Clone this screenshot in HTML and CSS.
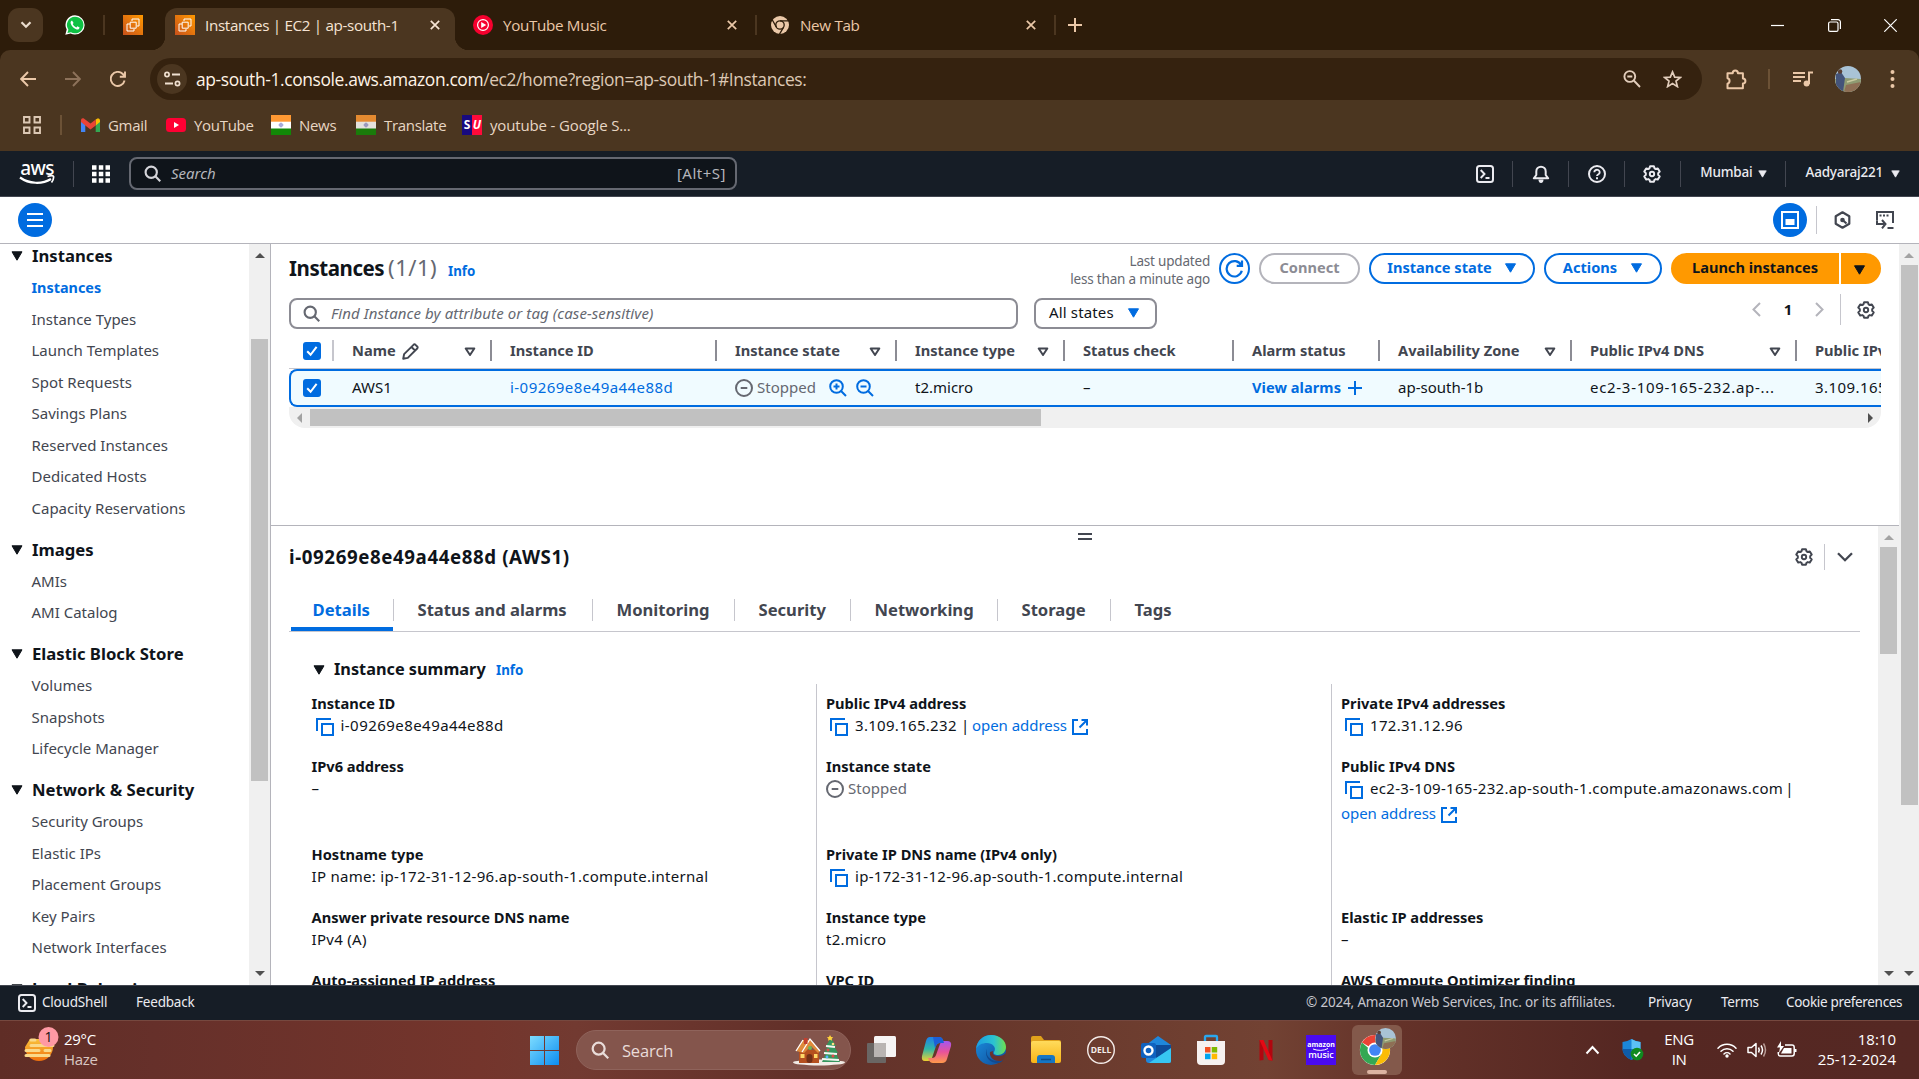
FILE: index.html
```html
<!DOCTYPE html>
<html lang="en">
<head>
<meta charset="utf-8">
<title>Instances | EC2 | ap-south-1</title>
<link rel="stylesheet" href="styles.css">
</head>
<body>
<svg class="defs" width="0" height="0" aria-hidden="true">
  <defs>
    <linearGradient id="g-ec2" x1="0" y1="1" x2="1" y2="0"><stop offset="0" stop-color="#c8511b"/><stop offset="1" stop-color="#ff9900"/></linearGradient>
    <linearGradient id="g-win" x1="0" y1="0" x2="1" y2="1"><stop offset="0" stop-color="#7ddcff"/><stop offset="1" stop-color="#0c8df0"/></linearGradient>
    <linearGradient id="g-edge" x1="0" y1="0" x2="1" y2="0"><stop offset="0" stop-color="#1b9de2"/><stop offset=".6" stop-color="#2cc3d0"/><stop offset="1" stop-color="#6ee04f"/></linearGradient>
    <linearGradient id="g-edge2" x1="0" y1="0" x2="1" y2="1"><stop offset="0" stop-color="#1b8fe0"/><stop offset="1" stop-color="#0f4a96"/></linearGradient>
    <linearGradient id="g-folder" x1="0" y1="0" x2="0" y2="1"><stop offset="0" stop-color="#ffdb5c"/><stop offset="1" stop-color="#f8b416"/></linearGradient>
    <linearGradient id="g-cop1" x1="0" y1="0" x2="0" y2="1"><stop offset="0" stop-color="#1f7fe8"/><stop offset=".5" stop-color="#2fb6a8"/><stop offset="1" stop-color="#f0d030"/></linearGradient>
    <linearGradient id="g-cop2" x1="0" y1="0" x2="0" y2="1"><stop offset="0" stop-color="#a456f0"/><stop offset=".5" stop-color="#e8529a"/><stop offset="1" stop-color="#ff9a4a"/></linearGradient>
    <linearGradient id="g-sun" x1="0" y1="0" x2="0" y2="1"><stop offset="0" stop-color="#f9c23c"/><stop offset="1" stop-color="#f0700c"/></linearGradient>
    <symbol id="i-ec2" viewBox="0 0 20 20"><rect width="20" height="20" fill="url(#g-ec2)"/><path d="M7.200 7.200h6v6h-6zM9 6V4h7v7h-2M7 9H4v7h7v-2" fill="none" stroke="#fff" stroke-width="1"/></symbol>
    <symbol id="i-x" viewBox="0 0 10 10"><path d="M.8.8l8.400 8.400M9.200.8L.8 9.200" fill="none" stroke="currentColor" stroke-width="1.700"/></symbol>
    <symbol id="i-search" viewBox="0 0 16 16"><circle cx="6.800" cy="6.800" r="5.300" fill="none" stroke="currentColor" stroke-width="2"/><path d="M10.700 10.700l4.600 4.600" stroke="currentColor" stroke-width="2"/></symbol>
    <symbol id="i-gear" viewBox="0 0 18 18"><path d="M7.100 1.300h3.800l.6 2 1.300.7 2-.6 1.900 3.200-1.500 1.500v1.800l1.500 1.500-1.900 3.200-2-.5-1.300.7-.6 2H7.100l-.6-2-1.300-.7-2 .5-1.900-3.200 1.500-1.500V8.100L1.300 6.600l1.900-3.200 2 .6 1.300-.7z" fill="none" stroke="currentColor" stroke-width="2" stroke-linejoin="round"/><circle cx="9" cy="9" r="2.200" fill="none" stroke="currentColor" stroke-width="1.900"/></symbol>
    <symbol id="i-shell" viewBox="0 0 18 18"><rect x="1" y="1" width="16" height="16" rx="2.500" fill="none" stroke="currentColor" stroke-width="2"/><path d="M4.700 5l3.800 4-3.800 4M9.500 13h4" fill="none" stroke="currentColor" stroke-width="1.900"/></symbol>
    <symbol id="i-tri" viewBox="0 0 12 10"><path d="M1 .8h10L6 9.200z" fill="currentColor" stroke="currentColor" stroke-width="1" stroke-linejoin="round"/></symbol>
    <symbol id="i-trio" viewBox="0 0 12 10"><path d="M1.700 1.500h8.600L6 8z" fill="none" stroke="currentColor" stroke-width="2" stroke-linejoin="round"/></symbol>
    <symbol id="i-check" viewBox="0 0 18 18"><rect width="18" height="18" rx="3" fill="#006ce0"/><path d="M4.200 9.200l3.400 3.600 6-8" fill="none" stroke="#fff" stroke-width="2"/></symbol>
    <symbol id="i-copy" viewBox="0 0 18 18"><path d="M1 13V1h14" fill="none" stroke="#006ce0" stroke-width="2"/><rect x="6" y="6" width="11" height="11" fill="#fff" stroke="#006ce0" stroke-width="2"/></symbol>
    <symbol id="i-ext" viewBox="0 0 16 16"><path d="M6 1H1v14h14V10M9.500 1H15v5.500M15 1L7.500 8.500" fill="none" stroke="#006ce0" stroke-width="2"/></symbol>
    <symbol id="i-stop" viewBox="0 0 18 18"><circle cx="9" cy="9" r="8" fill="none" stroke="#656871" stroke-width="2"/><path d="M5.700 9h6.600" stroke="#656871" stroke-width="2"/></symbol>
    <symbol id="i-flag" viewBox="0 0 20 20"><rect width="20" height="20" fill="#fff"/><rect width="20" height="6.700" fill="#ff9933"/><rect y="13.500" width="20" height="6.500" fill="#128807"/><circle cx="10" cy="10" r="2" fill="#8f93cc"/><path d="M10 7v6M7 10h6" stroke="#b9bbe2" stroke-width=".7"/></symbol>
    <symbol id="i-chrome" viewBox="0 0 36 36"><circle cx="18" cy="18" r="17" fill="#fff"/><path d="M18 18L3.300 9.500A17 17 0 0 1 32.700 9.500z" fill="#ea4335"/><path d="M3.300 9.500A17 17 0 0 0 18 35l7.400-12.700H18z" fill="#34a853"/><path d="M32.700 9.500A17 17 0 0 1 18 35l7.400-12.800L18 9.500z" fill="#fbbc05"/><circle cx="18" cy="18" r="8.500" fill="#fff"/><circle cx="18" cy="18" r="6.600" fill="#4285f4"/></symbol>
    <symbol id="i-photo" viewBox="0 0 26 26"><clipPath id="c-photo"><circle cx="13" cy="13" r="13"/></clipPath><g clip-path="url(#c-photo)"><rect width="26" height="26" fill="#a9c3d6"/><path d="M0 13l10-1 16 1v13H0z" fill="#8f9b72"/><path d="M11 19l15-3v10H9z" fill="#8e6f55"/><path d="M1 8l5-2 4 6-2 14H1z" fill="#44547a"/><circle cx="5" cy="5.500" r="2.300" fill="#5a4035"/><path d="M12 16l10-3" stroke="#c9cba0" stroke-width="1.500"/></g></symbol>
  </defs>
</svg>

<header class="browser">
  <div class="tabstrip">
    <div class="tabmenu"><svg width="12" height="8" viewBox="0 0 12 8"><path d="M1.500 1.200L6 5.800l4.500-4.600" fill="none" stroke="#eadccd" stroke-width="2.200"/></svg></div>
    <svg class="fav" viewBox="0 0 20 20"><path d="M10 .3A9.600 9.600 0 0 1 10 19.600a9.800 9.800 0 0 1-4.400-1L.3 19.800 1.700 14.600A9.600 9.600 0 0 1 10 .3z" fill="#fff"/><path d="M10 1.700a8.300 8.300 0 1 1-4 15.500l-3.600.9 1-3.400A8.300 8.300 0 0 1 10 1.700z" fill="#0fc144"/><path d="M7 5.500c-.9.300-1.800 1.500-1.300 3 .9 2.900 3.200 5 6 5.900 1.500.4 2.700-.6 2.900-2l-2.200-1.100-1 1.200C9.600 11.700 8.400 10.600 7.700 9l.9-1.100z" fill="#fff"/></svg>
    <i class="tdiv"></i>
    <svg class="fav"><use href="#i-ec2"/></svg>
    <div class="tab active"><svg class="fav"><use href="#i-ec2"/></svg><span class="tt">Instances | EC2 | ap-south-1</span><svg class="cl"><use href="#i-x"/></svg></div>
    <div class="tab"><svg class="fav" viewBox="0 0 20 20"><circle cx="10" cy="10" r="10" fill="#f5002e"/><circle cx="10" cy="10" r="5.400" fill="none" stroke="#fff" stroke-width="1.200"/><path d="M8.200 7l5 3-5 3z" fill="#fff"/></svg><span class="tt">YouTube Music</span><svg class="cl"><use href="#i-x"/></svg></div>
    <i class="tdiv"></i>
    <div class="tab third"><svg class="fav" viewBox="0 0 20 20"><circle cx="10" cy="10" r="9" fill="#ebc8a8"/><circle cx="10" cy="10" r="4.200" fill="#ebc8a8" stroke="#2d1c0a" stroke-width="1.300"/><path d="M10 5.800h8.500M6.400 12.100L2.200 4.800M13.600 12.100L9.400 19.400" stroke="#2d1c0a" stroke-width="1.300"/></svg><span class="tt">New Tab</span><svg class="cl"><use href="#i-x"/></svg></div>
    <i class="tdiv"></i>
    <svg class="plus" width="14" height="14" viewBox="0 0 14 14"><path d="M7 0v14M0 7h14" stroke="#ebc8a8" stroke-width="2"/></svg>
    <div class="winctl">
      <svg width="13" height="13" viewBox="0 0 13 13"><path d="M0 6.500h13" stroke="#fff" stroke-width="1.200"/></svg>
      <svg width="13" height="13" viewBox="0 0 13 13"><rect x=".6" y="3" width="9.400" height="9.400" rx="1.500" fill="none" stroke="#fff" stroke-width="1.200"/><path d="M3 .7h7a2.400 2.400 0 0 1 2.400 2.400V10" fill="none" stroke="#fff" stroke-width="1.200"/></svg>
      <svg width="13" height="13" viewBox="0 0 13 13"><path d="M.3.300l12.400 12.400M12.700.300L.3 12.700" stroke="#fff" stroke-width="1.200"/></svg>
    </div>
  </div>
  <div class="toolbar">
    <div class="urlrow">
      <svg width="16" height="16" viewBox="0 0 16 16"><path d="M16 8H1.500M8 1L1.200 8 8 15" fill="none" stroke="#ebc8a8" stroke-width="1.900"/></svg>
      <svg width="16" height="16" viewBox="0 0 16 16"><path d="M0 8h14.500M8 1l6.800 7L8 15" fill="none" stroke="#8d725a" stroke-width="1.900"/></svg>
      <svg width="16" height="16" viewBox="0 0 16 16"><path d="M14.600 9.500A7 7 0 1 1 12.800 3L15 5.500M15 .5v5.200H9.800" fill="none" stroke="#ebc8a8" stroke-width="1.900"/></svg>
      <div class="omni">
        <span class="site"><svg width="17" height="16" viewBox="0 0 17 16"><circle cx="3" cy="3.500" r="2.100" fill="none" stroke="#f0e0d0" stroke-width="1.700"/><path d="M8 3.500h8M1 12.500h8" stroke="#f0e0d0" stroke-width="1.800"/><circle cx="13.500" cy="12.500" r="2.100" fill="none" stroke="#f0e0d0" stroke-width="1.700"/></svg></span>
        <span class="url"><b>ap-south-1.console.aws.amazon.com</b>/ec2/home?region=ap-south-1#Instances:</span>
        <svg class="oz" width="18" height="18" viewBox="0 0 18 18"><circle cx="6.800" cy="6.500" r="5.400" fill="none" stroke="#e2cdbb" stroke-width="1.900"/><path d="M10.800 10.500l6.200 6.500M4.300 6.500h5" stroke="#e2cdbb" stroke-width="1.900"/></svg>
        <svg width="19" height="18" viewBox="0 0 19 18"><path d="M9.500 1.900l2.200 5.200 5.600.4-4.300 3.600 1.400 5.500-4.900-3-4.900 3L6 11.100 1.700 7.500l5.600-.4z" fill="none" stroke="#e2cdbb" stroke-width="1.700"/></svg>
      </div>
      <svg class="puz" width="21" height="21" viewBox="0 0 21 21"><path d="M1.500 4.200h5.200a2.600 2.600 0 0 1 5.200 0h5v5.200a2.500 2.500 0 0 1 0 5v4.900H1.500v-4.600a2.800 2.800 0 0 0 0-5.400z" fill="none" stroke="#ebc8a8" stroke-width="2" stroke-linejoin="round"/></svg>
      <i class="bdiv"></i>
      <svg width="20" height="16" viewBox="0 0 20 16"><path d="M0 2h12M0 6h12M0 10h8M16 13V1.500h4" fill="none" stroke="#ebc8a8" stroke-width="2"/><circle cx="13.600" cy="12.600" r="3" fill="#ebc8a8"/></svg>
      <svg class="ava" width="26" height="26"><use href="#i-photo"/></svg>
      <svg class="dots" width="5" height="20" viewBox="0 0 5 20"><g fill="#ebc8a8"><circle cx="2.500" cy="3" r="2"/><circle cx="2.500" cy="10" r="2"/><circle cx="2.500" cy="17" r="2"/></g></svg>
    </div>
    <div class="bookmarks">
      <svg width="18" height="18" viewBox="0 0 18 18"><path d="M1 1h5.500v5.500H1zM11.500 1H17v5.500h-5.500zM1 11.500h5.500V17H1zM11.500 11.500H17V17h-5.500z" fill="none" stroke="#dcc8b4" stroke-width="1.900"/></svg>
      <i class="bdiv"></i>
      <svg width="19" height="14" viewBox="0 0 19 14"><path d="M0 1.500V14h4.300V6z" fill="#4285f4"/><path d="M19 1.500V14h-4.300V6z" fill="#34a853"/><path d="M14.700 1.500L17 .2q2 .3 2 2V4l-4.300 3.500z" fill="#fbbc04"/><path d="M0 4V2Q.3-.3 2.500.3L9.500 5.500 14.700 1.500V7.500L9.500 11.500 4.300 7.500 0 4z" fill="#ea4335"/></svg><span>Gmail</span>
      <svg width="20" height="14" viewBox="0 0 20 14"><rect width="20" height="14" rx="3.500" fill="#ff0033"/><path d="M8 4l5 3-5 3z" fill="#fff"/></svg><span>YouTube</span>
      <svg width="20" height="20"><use href="#i-flag"/></svg><span>News</span>
      <svg class="dim" width="20" height="20"><use href="#i-flag"/></svg><span>Translate</span>
      <b class="su"><em>S</em><em>U</em></b><span>youtube - Google S...</span>
    </div>
  </div>
</header>

<header class="awsnav">
  <span class="awslogo"><span>aws</span><svg width="36" height="11" viewBox="0 0 36 11"><path d="M1 2.500c9 6.500 22 7 31 1.500" fill="none" stroke="#fff" stroke-width="2.200"/><path d="M28.500 1.500c4-1.200 6-.8 6 0 .3 1.600-.5 4-2 6" fill="none" stroke="#fff" stroke-width="1.700"/></svg></span>
  <i class="vd"></i>
  <svg width="18" height="18" viewBox="0 0 18 18"><path d="M0 2.500h4.500M6.800 2.500h4.500M13.500 2.500H18M0 9h4.500M6.800 9h4.500M13.500 9H18M0 15.500h4.500M6.800 15.500h4.500M13.500 15.500H18" stroke="#fff" stroke-width="4.300"/></svg>
  <div class="nsearch"><svg width="17" height="17"><use href="#i-search"/></svg><em>Search</em><span>[Alt+S]</span></div>
  <div class="navr">
    <svg width="18" height="18"><use href="#i-shell"/></svg><i class="vd"></i>
    <svg width="18" height="18" viewBox="0 0 18 18"><path d="M1.800 13.300h14.400L13.700 10V6.400a4.700 4.700 0 0 0-9.400 0V10z" fill="none" stroke="currentColor" stroke-width="2" stroke-linejoin="round"/><path d="M6.500 14.500a2.500 3.400 0 0 0 5 0z" fill="currentColor"/></svg><i class="vd"></i>
    <svg width="18" height="18" viewBox="0 0 18 18"><circle cx="9" cy="9" r="8" fill="none" stroke="currentColor" stroke-width="2"/><path d="M6.300 7.300a2.700 2.500 0 1 1 4.200 2Q9 10.200 9 11" fill="none" stroke="currentColor" stroke-width="1.900"/><path d="M8 12.300h2v2H8z" fill="currentColor"/></svg><i class="vd"></i>
    <svg width="18" height="18"><use href="#i-gear"/></svg><i class="vd"></i>
    <span class="nt n1">Mumbai</span><svg width="9" height="8"><use href="#i-tri"/></svg><i class="vd"></i>
    <span class="nt n2">Aadyaraj221</span><svg width="9" height="8"><use href="#i-tri"/></svg>
  </div>
</header>

<div class="subbar">
  <span class="round"><svg width="16" height="14" viewBox="0 0 16 14"><path d="M0 1h16M0 7h16M0 13h16" stroke="#fff" stroke-width="2"/></svg></span>
  <span class="round r2"><svg width="18" height="18" viewBox="0 0 18 18"><rect x="1" y="1" width="16" height="16" fill="none" stroke="#fff" stroke-width="2"/><rect x="4.500" y="8" width="9" height="6" fill="#fff"/></svg></span>
  <i></i>
  <svg width="17" height="18" viewBox="0 0 17 18"><path d="M8.500 1.300l6.800 3.900v7.600l-6.800 3.900-6.800-3.900V5.200z" fill="none" stroke="#424650" stroke-width="2.200" stroke-linejoin="round"/><path d="M8.500 9l4 3.500" stroke="#424650" stroke-width="2.200"/><circle cx="8.500" cy="9" r="2.300" fill="#424650"/></svg>
  <svg class="sb2" width="18" height="18" viewBox="0 0 18 18"><path d="M1 9.500V1h16v11" fill="none" stroke="#424650" stroke-width="2"/><path d="M3.500 4.500h2M7 4.500h2M10.500 4.500h2" stroke="#424650" stroke-width="1.800"/><path d="M1 9.500V13h7M6 9l3.500 4L6 17.300M11.500 17h6" fill="none" stroke="#424650" stroke-width="2"/></svg>
</div>

<div class="app">
  <nav class="side">
    <div class="menu">
      <h3><svg><use href="#i-tri"/></svg>Instances</h3>
      <a class="on">Instances</a><a>Instance Types</a><a>Launch Templates</a><a>Spot Requests</a><a>Savings Plans</a><a>Reserved Instances</a><a>Dedicated Hosts</a><a>Capacity Reservations</a>
      <h3><svg><use href="#i-tri"/></svg>Images</h3>
      <a>AMIs</a><a>AMI Catalog</a>
      <h3><svg><use href="#i-tri"/></svg>Elastic Block Store</h3>
      <a>Volumes</a><a>Snapshots</a><a>Lifecycle Manager</a>
      <h3><svg><use href="#i-tri"/></svg>Network &amp; Security</h3>
      <a>Security Groups</a><a>Elastic IPs</a><a>Placement Groups</a><a>Key Pairs</a><a>Network Interfaces</a>
      <h3><svg><use href="#i-tri"/></svg>Load Balancing</h3>
    </div>
    <div class="vbar s1"><b class="up dk"></b><u></u><b class="dn"></b></div>
  </nav>
  <div class="content">
    <section class="list">
      <div class="head">
        <h1>Instances <span>(1/1)</span></h1><a class="info">Info</a>
        <p class="upd">Last updated<br>less than a minute ago</p>
        <button class="btn rf"><svg width="19" height="19" viewBox="0 0 19 19"><path d="M16.800 11.800a7.700 7.700 0 1 1-.6-5.600M17 1.500v5.300h-5.300" fill="none" stroke="#006ce0" stroke-width="2.200"/></svg></button>
        <button class="btn off">Connect</button>
        <button class="btn b3">Instance state<svg><use href="#i-tri"/></svg></button>
        <button class="btn b4">Actions<svg><use href="#i-tri"/></svg></button>
        <button class="btn go">Launch instances</button><button class="btn go2"><svg><use href="#i-tri"/></svg></button>
      </div>
      <div class="filters">
        <div class="find"><svg width="17" height="17"><use href="#i-search"/></svg><em>Find Instance by attribute or tag (case-sensitive)</em></div>
        <div class="states">All states<svg><use href="#i-tri"/></svg></div>
        <div class="pager"><svg width="9" height="15" viewBox="0 0 9 15"><path d="M8 1L1.500 7.500 8 14" fill="none" stroke="#b4b4bb" stroke-width="2"/></svg><b>1</b><svg width="9" height="15" viewBox="0 0 9 15"><path d="M1 1l6.500 6.500L1 14" fill="none" stroke="#b4b4bb" stroke-width="2"/></svg><i></i><svg width="18" height="18"><use href="#i-gear"/></svg></div>
      </div>
      <div class="tbl">
        <div class="tr th">
          <div class="first"><svg class="cb"><use href="#i-check"/></svg></div>
          <div>Name<svg class="pen" width="17" height="17" viewBox="0 0 17 17"><path d="M1.200 15.800l.9-4.600L11.500 1.800q1-.9 2 0l1.700 1.700q.9 1 0 2L5.800 14.900zM9.500 4l3.500 3.500" fill="none" stroke="#424650" stroke-width="1.900" stroke-linejoin="round"/></svg><svg class="so"><use href="#i-trio"/></svg></div>
          <div>Instance ID</div>
          <div>Instance state<svg class="so"><use href="#i-trio"/></svg></div>
          <div>Instance type<svg class="so"><use href="#i-trio"/></svg></div>
          <div>Status check</div><div>Alarm status</div>
          <div>Availability Zone<svg class="so"><use href="#i-trio"/></svg></div>
          <div>Public IPv4 DNS<svg class="so"><use href="#i-trio"/></svg></div>
          <div>Public IPv4</div>
        </div>
        <div class="tr td">
          <div class="first"><svg class="cb"><use href="#i-check"/></svg></div>
          <div>AWS1</div><div class="lk id">i-09269e8e49a44e88d</div>
          <div class="stp"><svg width="18" height="18"><use href="#i-stop"/></svg>Stopped<svg class="zi" width="18" height="18" viewBox="0 0 18 18"><path d="M11.800 11.800l5.200 5.200M7.500 4.500v6M4.500 7.500h6" stroke="#006ce0" stroke-width="2"/><circle cx="7.500" cy="7.500" r="6.300" fill="none" stroke="#006ce0" stroke-width="2"/></svg><svg class="zo" width="18" height="18" viewBox="0 0 18 18"><path d="M11.800 11.800l5.200 5.200M4.500 7.500h6" stroke="#006ce0" stroke-width="2"/><circle cx="7.500" cy="7.500" r="6.300" fill="none" stroke="#006ce0" stroke-width="2"/></svg></div>
          <div>t2.micro</div><div>–</div>
          <div class="va">View alarms<svg width="14" height="14" viewBox="0 0 14 14"><path d="M7 0v14M0 7h14" stroke="#006ce0" stroke-width="2"/></svg></div>
          <div>ap-south-1b</div><div class="dns">ec2-3-109-165-232.ap-...</div><div class="id">3.109.165.232</div>
        </div>
        <div class="hbar"><b></b><u></u><s></s></div>
      </div>
    </section>
    <section class="panel">
      <div class="pmain">
        <div class="grip"><i></i><i></i></div>
        <div class="ptitle"><h2>i-09269e8e49a44e88d (AWS1)</h2><svg width="18" height="18"><use href="#i-gear"/></svg><i></i><svg width="16" height="10" viewBox="0 0 16 10"><path d="M1 1.200l7 7 7-7" fill="none" stroke="#424650" stroke-width="2.300"/></svg></div>
        <div class="tabs"><a class="on">Details</a><a>Status and alarms</a><a>Monitoring</a><a>Security</a><a>Networking</a><a>Storage</a><a>Tags</a></div>
        <h4><svg><use href="#i-tri"/></svg><span>Instance summary</span><a class="info">Info</a></h4>
        <div class="cols">
          <dl><dt>Instance ID</dt><dd class="id"><svg class="cp"><use href="#i-copy"/></svg>i-09269e8e49a44e88d</dd></dl>
          <dl><dt>Public IPv4 address</dt><dd><svg class="cp"><use href="#i-copy"/></svg><span class="ip">3.109.165.232 |</span><a>open address</a><svg class="ex"><use href="#i-ext"/></svg></dd></dl>
          <dl><dt>Private IPv4 addresses</dt><dd><svg class="cp"><use href="#i-copy"/></svg>172.31.12.96</dd></dl>
          <dl><dt>IPv6 address</dt><dd>–</dd></dl>
          <dl><dt>Instance state</dt><dd class="st"><svg width="18" height="18"><use href="#i-stop"/></svg>Stopped</dd></dl>
          <dl><dt>Public IPv4 DNS</dt><dd><svg class="cp"><use href="#i-copy"/></svg>ec2-3-109-165-232.ap-south-1.compute.amazonaws.com<span class="bar">|</span></dd><dd class="second"><a>open address</a><svg class="ex"><use href="#i-ext"/></svg></dd></dl>
          <dl><dt>Hostname type</dt><dd>IP name: ip-172-31-12-96.ap-south-1.compute.internal</dd></dl>
          <dl><dt>Private IP DNS name (IPv4 only)</dt><dd><svg class="cp"><use href="#i-copy"/></svg>ip-172-31-12-96.ap-south-1.compute.internal</dd></dl>
          <dl></dl>
          <dl><dt>Answer private resource DNS name</dt><dd>IPv4 (A)</dd></dl>
          <dl><dt>Instance type</dt><dd>t2.micro</dd></dl>
          <dl><dt>Elastic IP addresses</dt><dd>–</dd></dl>
          <dl><dt>Auto-assigned IP address</dt></dl><dl><dt>VPC ID</dt></dl><dl><dt>AWS Compute Optimizer finding</dt></dl>
        </div>
      </div>
      <div class="vbar s3"><b class="up"></b><u></u><b class="dn"></b></div>
    </section>
  </div>
  <div class="vbar s2"><b class="up"></b><u></u><b class="dn"></b></div>
</div>

<footer class="foot">
  <svg width="18" height="18"><use href="#i-shell"/></svg><span class="f1">CloudShell</span><span class="f2">Feedback</span>
  <span class="f3">© 2024, Amazon Web Services, Inc. or its affiliates.</span><span class="f4">Privacy</span><span class="f5">Terms</span><span class="f6">Cookie preferences</span>
</footer>

<div class="taskbar">
  <svg class="wx" width="36" height="38" viewBox="0 0 36 38"><path d="M1 20a14 14 0 0 0 28 0l-1-8H6z" fill="url(#g-sun)"/><path d="M7 13h4M7 18.500h22M2 23.500h13M21 23.500h5M2 28.500h23" stroke="#fad98a" stroke-width="3" stroke-linecap="round"/><circle cx="24.500" cy="10" r="10" fill="#ff99a4"/><text x="24.500" y="15" text-anchor="middle" font-size="14" fill="#111">1</text></svg>
  <div class="wt"><span>29°C</span><span>Haze</span></div>
  <svg class="start" width="29" height="29" viewBox="0 0 29 29"><path d="M0 0h14v14H0zM15 0h14v14H15zM0 15h14v14H0zM15 15h14v14H15z" fill="url(#g-win)"/></svg>
  <div class="tsearch"><svg width="18" height="18"><use href="#i-search"/></svg><span>Search</span>
    <svg width="54" height="31" viewBox="0 0 54 31"><ellipse cx="27" cy="27.500" rx="26" ry="3" fill="#f1eae4"/><path d="M7 15h20v13H7z" fill="#b5501f"/><path d="M4 16l7-11h8l9 11-2 2-7-7-7 7z" fill="#de8a3b"/><path d="M4 16l7-11M28 16L18 4l-8 13" stroke="#fff" stroke-width="1.300" fill="none"/><rect x="12" y="3" width="3.500" height="6" fill="#c2402f"/><rect x="14.500" y="19" width="6" height="9" rx="3" fill="#733017"/><path d="M8.500 19h4v4h-4zM22 19h3.500v4H22z" fill="#ffd868"/><circle cx="18" cy="13" r="2" fill="#6db657"/><path d="M39 3l-5 8h2l-4 7h2l-4 9h18l-4-9h2l-4-7h2z" fill="#35965d"/><path d="M34 11l9 1M32 18l13 1M30 24l17 1" stroke="#f4f7f2" stroke-width="2.200"/><path d="M38 0l1.200 2 2 .3-1.500 1.500.4 2-2.100-1-2 1 .4-2-1.500-1.500 2-.3z" fill="#ffd23c"/><circle cx="36" cy="15" r="1.500" fill="#e04a4a"/><circle cx="41" cy="21" r="1.500" fill="#e04a4a"/><circle cx="41" cy="9" r="1.300" fill="#ffe082"/><circle cx="35" cy="22" r="1.400" fill="#5ab4ff"/></svg>
  </div>
  <div class="apps">
    <svg viewBox="0 0 32 32"><rect x="2" y="9" width="19" height="20" rx="1" fill="#6a6664"/><rect x="9" y="2" width="22" height="21" rx="1.500" fill="#f6f4f4"/><path d="M9 9h12v14H9z" fill="#b9b4b2"/></svg>
    <svg viewBox="0 0 32 32"><path d="M10 3h9q3 0 4 3l1 3h-4q-3 0-4 3l-4 12q-1 3-4 3H5q-4 0-3-5L6 7q1-4 4-4z" fill="url(#g-cop1)"/><path d="M22 29h-9q-3 0-4-3l-1-2h4q3 0 4-3l4-11q1-3 4-3h3q5 0 4 5l-4 13q-1 4-5 4z" fill="url(#g-cop2)"/><path d="M10 3h9q3 0 4 3l1 3h-4q-3 0-4 3l-1 2-2-11z" fill="#1c5fd8"/></svg>
    <svg viewBox="0 0 32 32"><circle cx="16" cy="16" r="15" fill="url(#g-edge2)"/><path d="M1 15C2 6 9 1 16 1c9 0 15 6 15 12 0 5-4 8-8 8-3 0-5-1-4-3 3-5-2-9-7-9C7 9 3 11 1 15z" fill="url(#g-edge)"/><path d="M12 15c-3 5 1 14 10 14 3 0 5-1 6-3-2 1-4 1-6 1-7 0-12-6-10-12z" fill="#104a91"/><path d="M18 17c-1 3 1 5 6 5 3 0 5-1 7-3-1 5-3 7-5 8-8 1-12-5-11-9z" fill="#6a322c"/></svg>
    <svg viewBox="0 0 32 32"><path d="M1 4q0-2 2-2h8l3 4h15q2 0 2 2v6H1z" fill="#e0a11b"/><rect x="1" y="7" width="30" height="22" rx="2" fill="url(#g-folder)"/><path d="M7 29v-5q0-3 3-3h12q3 0 3 3v5z" fill="#1676c4"/><path d="M11 25.500h10" stroke="#0e4d87" stroke-width="1.500"/></svg>
    <svg viewBox="0 0 32 32"><circle cx="16" cy="16" r="13.300" fill="none" stroke="#f4ece9" stroke-width="1.400"/><text x="16" y="19" text-anchor="middle" font-size="8.500" font-weight="700" fill="#f4ece9">DELL</text></svg>
    <svg viewBox="0 0 32 32"><path d="M6 11L18 2l13 9v16q0 2-2 2H9q-3 0-3-3z" fill="#1f87dc"/><path d="M12 11l19 0v4L16 24z" fill="#0d4b9a"/><path d="M9 29l22-15v13q0 2-2 2z" fill="#37c6f2"/><rect x="1" y="9" width="15" height="15" rx="2" fill="#0f62c0"/><circle cx="8.500" cy="16.500" r="4" fill="none" stroke="#fff" stroke-width="2.400"/></svg>
    <svg viewBox="0 0 32 32"><path d="M10 8V3q0-1 1-1h10q1 0 1 1v5" fill="none" stroke="#2aa7ee" stroke-width="2.300"/><path d="M2 7h28v20q0 4-4 4H6q-4 0-4-4z" fill="#f6f1f0"/><path d="M10 13h5.500v5.500H10z" fill="#f25022"/><path d="M16.700 13h5.500v5.500h-5.500z" fill="#7fba00"/><path d="M10 19.700h5.500v5.500H10z" fill="#00a4ef"/><path d="M16.700 19.700h5.500v5.500h-5.500z" fill="#ffb900"/></svg>
    <svg viewBox="0 0 32 32"><path d="M9.500 6h4v20l-4 .6zM18.500 6h4v20.600l-4-.6z" fill="#b1060f"/><path d="M9.500 6h4l9 20.600-4-.6z" fill="#e50914"/></svg>
    <svg viewBox="0 0 32 32"><rect x="1" y="1" width="30" height="30" fill="#4a0af0"/><text x="16" y="13" text-anchor="middle" font-size="7" font-weight="700" fill="#fff">amazon</text><path d="M8 15q8 3 15-.5" fill="none" stroke="#fff"/><text x="16" y="24" text-anchor="middle" font-size="9" font-weight="600" fill="#fff">music</text></svg>
    <span class="cur"><svg width="40" height="40" viewBox="0 0 40 40"><use href="#i-chrome" x="2" y="6" width="32" height="32"/><use href="#i-photo" x="18" y="0" width="21" height="21"/></svg><i></i></span>
  </div>
  <div class="tray">
    <svg width="15" height="10" viewBox="0 0 15 10"><path d="M1.500 8.500l6-6.500 6 6.500" fill="none" stroke="#fff" stroke-width="2"/></svg>
    <svg class="sh" width="22" height="22" viewBox="0 0 22 22"><path d="M9.500 0q5 3 9 3v7q0 7-9 11Q.5 17 .5 10V3q4 0 9-3z" fill="#1b86d8"/><path d="M9.500 0q5 3 9 3v7h-9z" fill="#5cc1f5"/><path d="M9.500 10v11Q.5 17 .5 10z" fill="#0f5ba8"/><circle cx="15" cy="15" r="6.300" fill="#0f8a1f"/><path d="M12 15l2.200 2.200 3.800-4.200" fill="none" stroke="#fff" stroke-width="1.600"/></svg>
    <div class="lang"><span>ENG</span><span>IN</span></div>
    <svg class="wf" width="20" height="16" viewBox="0 0 20 16"><g fill="none" stroke="#fff" stroke-width="1.500" stroke-linecap="round"><path d="M1 6.200a12.500 12.500 0 0 1 18 0M4 9.200a8.400 8.400 0 0 1 12 0M7 12a4.300 4.300 0 0 1 6 0"/></g><circle cx="10" cy="14" r="1.700" fill="#fff"/></svg>
    <svg class="sp" width="20" height="18" viewBox="0 0 20 18"><g fill="none" stroke="#fff" stroke-width="1.500"><path d="M1 6.500h3.500L9 2.500v13L4.500 11.500H1z" stroke-linejoin="round"/><path d="M11.500 6.500q1.500 2.500 0 5M14 4.500q3 4.500 0 9"/><path d="M16.500 2.500q4 6.500 0 13" stroke="#b79a94"/></g></svg>
    <svg class="bt" width="21" height="18" viewBox="0 0 21 18"><path d="M9 4h7q2.200 0 2.200 2.200v6.600Q18.200 15 16 15H4.500q-2.200 0-2.200-2.200V11" fill="none" stroke="#fff" stroke-width="1.500"/><path d="M5 12.500h10.500V7H8z" fill="#fff"/><path d="M19.500 8v3" stroke="#fff" stroke-width="2"/><path d="M5 0L1 6.500h3L3 12l5-7H5z" fill="#fff"/></svg>
    <div class="clock"><span>18:10</span><span>25-12-2024</span></div>
  </div>
</div>
</body>
</html>
```
FILE: styles.css
```css
* { box-sizing: border-box; }
body { margin: 0; width: 1919px; height: 1079px; overflow: hidden; display: flex; flex-direction: column; background: #fff; font-family: "Noto Sans", sans-serif; font-size: 15px; color: #0f141a; }
svg { display: block; flex: none; }
i { flex: none; font-style: normal; }
h1, h2, h3, h4, p, dl, dd { margin: 0; }
.defs { position: absolute; }

/* Browser chrome */
.browser { height: 151px; flex: none; background: #2d1c0a; font-family: "Open Sans", sans-serif; display: flex; flex-direction: column; }
.tabstrip { height: 50px; display: flex; align-items: center; padding-left: 8px; color: #ebc8a8; }
.tabmenu { width: 35px; height: 34px; border-radius: 11px; background: #4b3620; display: grid; place-items: center; margin-right: 22px; }
.fav { width: 20px; height: 20px; }
.tdiv { width: 2px; height: 20px; background: #4b3620; }
.tabstrip > .tdiv:nth-of-type(1) { margin: 0 18px 0 18px; }
.tab { display: flex; align-items: center; height: 42px; align-self: flex-end; width: 282px; padding: 0 0 8px; margin-left: 18px; }
.tab .tt { margin-left: 10px; font-size: 15.200px; letter-spacing: -.32px; white-space: nowrap; flex: 1; }
.cl { width: 10px; height: 10px; margin-right: 18px; }
.tab.active { width: 290px; margin-left: 22px; background: #4b3620; border-radius: 12px 12px 0 0; padding-left: 10px; color: #f6e4d4; position: relative; }
.tab.active .cl { margin-right: 15px; }
.tab.active::before, .tab.active::after { content: ""; position: absolute; bottom: 0; width: 14px; height: 14px; }
.tab.active::before { left: -14px; background: radial-gradient(circle at 0 0, transparent 14px, #4b3620 14.500px); }
.tab.active::after { right: -14px; background: radial-gradient(circle at 100% 0, transparent 14px, #4b3620 14.500px); }
.tab.third { margin-left: 13px; width: 284px; }
.plus { margin-left: 12px; }
.winctl { margin-left: auto; display: flex; gap: 43.500px; margin-right: 22px; }
.toolbar { flex: 1; background: #4b3620; border-radius: 10px 10px 0 0; }
.urlrow { display: flex; align-items: center; height: 58px; padding-left: 20px; }
.urlrow > svg:nth-child(2) { margin: 0 29px; }
.omni { margin-left: 24px; width: 1552px; height: 42px; border-radius: 21px; background: #35220f; display: flex; align-items: center; padding: 0 20px 0 7px; }
.site { width: 30px; height: 30px; border-radius: 50%; background: #4b3620; display: grid; place-items: center; }
.url { margin-left: 9px; flex: 1; font-size: 17.400px; letter-spacing: -.37px; color: #dcc8b4; white-space: nowrap; }
.url b { font-weight: 400; color: #fff3e6; }
.oz { margin-right: 22px; }
.puz { margin-left: 24px; }
.bdiv { width: 2px; height: 20px; background: #6c5236; }
.urlrow .bdiv { margin: 0 23px 0 21px; }
.ava { margin-left: 22px; }
.dots { margin-left: 29px; }
.bookmarks { display: flex; align-items: center; height: 34px; color: #e8d6c4; font-size: 15px; letter-spacing: -.3px; padding-left: 23px; white-space: nowrap; }
.bookmarks .bdiv { margin: 0 19px 0 19px; }
.bookmarks span { margin-left: 8px; }
.bookmarks span:nth-of-type(1) { width: 58px; }
.bookmarks span:nth-of-type(2) { width: 77px; }
.bookmarks span:nth-of-type(3) { width: 57px; }
.bookmarks span:nth-of-type(4) { width: 78px; }
.bookmarks span:nth-of-type(5) { letter-spacing: -.15px; }
.dim { opacity: .85; }
.su { display: flex; width: 20px; height: 20px; background: linear-gradient(90deg, #180a80 50%, #ff0a3a 50%); color: #fff; font-size: 12px; line-height: 20px; }
.su em { flex: 1; text-align: center; letter-spacing: 0; }
.su em:first-child { font-style: normal; }

/* AWS navigation */
.awsnav { height: 46px; flex: none; background: #161d26; border-bottom: 1px solid #424650; display: flex; align-items: center; padding-left: 19px; color: #ebebf0; }
.awslogo { width: 36px; display: flex; flex-direction: column; align-items: center; color: #fff; }
.awslogo span { font-size: 19px; line-height: 15px; letter-spacing: -.6px; font-weight: 500; }
.awslogo svg { margin-top: -1px; }
.vd { width: 1px; height: 26px; background: #424650; }
.awsnav > .vd { margin: 0 18px; }
.nsearch { margin-left: 19px; width: 608px; height: 33px; border: 2px solid #656871; border-radius: 8px; background: #0f141a; display: flex; align-items: center; padding: 0 9px 0 13px; color: #b4b4bb; }
.nsearch svg { color: #d5d5da; }
.nsearch em { margin: 0 0 2px 10px; flex: 1; }
.nsearch span { letter-spacing: .5px; margin-bottom: 2px; }
.navr { margin-left: auto; display: flex; align-items: center; padding-right: 19px; font-size: 13.500px; font-weight: 500; }
.navr > svg + .vd { margin: 0 18.400px; }
.nt { line-height: 18px; margin-bottom: 3px; white-space: nowrap; letter-spacing: -.2px; }
.n1 { width: 57.500px; margin-left: 1px; }
.n2 { width: 85.500px; margin-left: 1px; }

.subbar { height: 47px; flex: none; border-bottom: 1px solid #b4b4bb; display: flex; align-items: center; padding-left: 18px; }
.round { width: 34px; height: 34px; border-radius: 50%; background: #006ce0; display: grid; place-items: center; }
.r2 { margin-left: auto; }
.subbar > i { width: 1px; height: 28px; background: #c6c6cd; margin: 0 17px 0 9px; }
.sb2 { margin: 0 25px; }

/* Page body */
.app { height: 741px; flex: none; display: flex; overflow: hidden; }
.side { width: 271px; display: flex; border-right: 1px solid #b4b4bb; }
.menu { flex: 1; overflow: hidden; }
.menu h3 { font-size: 16.700px; font-weight: 700; height: 32px; line-height: 32px; display: flex; align-items: center; padding-left: 11px; margin-top: 9.500px; white-space: nowrap; }
.menu h3:first-child { margin-top: -4px; }
.menu h3 svg { width: 12px; height: 10px; margin-right: 9px; }
.menu a { display: block; height: 31.500px; line-height: 31.500px; padding-left: 31.500px; color: #424650; white-space: nowrap; }
.menu a.on { color: #006ce0; font-weight: 700; font-size: 14.400px; }
.vbar { width: 21px; background: #f0f0f0; display: flex; flex-direction: column; align-items: center; flex: none; }
.vbar u { width: 17px; background: #c1c1c1; }
.vbar b { width: 0; height: 0; border: 5px solid transparent; }
.vbar .up { border-top: 0; border-bottom-color: #a3a3a3; margin-top: 9px; }
.vbar .dk { border-bottom-color: #505050; }
.vbar .dn { border-bottom: 0; border-top-color: #505050; margin-top: auto; margin-bottom: 9px; }
.s1 u { height: 442px; margin-top: 81px; }
.s2 { width: 20px; }
.s2 u { height: 540px; margin-top: 7px; }
.s3 u { height: 107px; margin-top: 7px; }

.content { flex: 1; min-width: 0; display: flex; flex-direction: column; }
.list { height: 281px; padding: 9px 0 0 18px; }
.head { display: flex; align-items: center; height: 31px; width: 1592px; }
h1 { font-size: 20.500px; line-height: 28px; font-weight: 700; white-space: nowrap; letter-spacing: -.45px; width: 159px; margin-bottom: 2px; }
h1 span { font-weight: 400; font-size: 22px; letter-spacing: .5px; color: #656871; margin-left: -1px; }
.info { color: #006ce0; font-size: 13.300px; font-weight: 700; padding-top: 4px; }
.upd { margin-left: auto; text-align: right; font-size: 13.500px; letter-spacing: -.2px; line-height: 18px; color: #656871; margin-right: 9px; padding-top: 3px; }
.btn { height: 31px; border: 2px solid #006ce0; border-radius: 16px; background: #fff; color: #006ce0; font: 700 14.600px "Noto Sans", sans-serif; padding: 0 0 3px; display: flex; align-items: center; justify-content: center; margin-left: 9px; white-space: nowrap; }
.btn svg:not([width]), .states svg { width: 13px; height: 10px; margin-top: 2px; }
.rf { width: 31px; margin-left: 0; padding: 0; }
.off { width: 101px; border-color: #b4b4bb; color: #8c8c94; }
.b3 { width: 166px; gap: 12px; }
.b4 { width: 118px; gap: 13px; }
.go { width: 168px; background: #ff9900; border-color: #ff9900; border-radius: 16px 0 0 16px; color: #0f141a; }
.go2 { width: 40px; margin-left: 2px; background: #ff9900; border-color: #ff9900; border-radius: 0 16px 16px 0; color: #0f141a; padding: 0 4px 0 0; }
.filters { display: flex; margin-top: 14px; width: 1592px; }
.find, .states { height: 31px; border: 2px solid #8c8c94; border-radius: 8px; display: flex; align-items: center; }
.find { width: 729px; padding-left: 12px; color: #656871; }
.find em { margin: 0 0 2px 11px; letter-spacing: .1px; }
.states { width: 123px; margin-left: 16px; padding: 0 0 3px 13px; letter-spacing: .15px; }
.states svg { color: #006ce0; margin-left: 13px; }
.pager { margin: -4px 6px 0 auto; display: flex; align-items: center; height: 31px; }
.pager b { width: 54px; text-align: center; margin-bottom: 2px; }
.pager i { width: 1px; height: 31px; background: #c6c6cd; margin: 0 16px; }
.pager svg:last-child { color: #424650; }
.tbl { width: 1592px; overflow: hidden; }
.tr { display: grid; grid-template-columns: 45px 158px 225px 180px 168px 169px 146px 192px 225px 84px; white-space: nowrap; }
.tr > div { display: flex; align-items: center; overflow: hidden; padding: 0 0 2px 18px; }
.tr > .first { padding: 0 0 0 14px; }
.th { height: 40px; border-bottom: 1px solid #c6c6cd; color: #424650; font-weight: 700; font-size: 14.650px; align-items: center; padding-top: 4px; }
.th > div { height: 21px; border-right: 2px solid #8c8c94; line-height: 20px; }
.th > div:first-child { border-color: #c6c6cd; }
.th > div:last-child { border: 0; }
.cb { width: 18px; height: 18px; }
.so { width: 12px; height: 10px; margin: 5px 14.500px 0 auto; }
.pen { margin: 3px 0 0 6px; }
.td { height: 38px; border: 2px solid #006ce0; border-right: 0; border-radius: 8px 0 0 8px; background: #f0fbff; grid-template-columns: 43px 158px 225px 180px 168px 169px 146px 192px 225px 84px; }
.td > .first { padding: 0 0 1px 12px; }
.lk { color: #006ce0; }
.id { letter-spacing: .45px; }
.dns { letter-spacing: .7px; }
.stp { color: #656871; gap: 4px; }
.stp svg { margin-top: 2px; }
.stp .zi { margin-left: 9px; }
.stp .zo { margin-left: 5px; }
.td .va { color: #006ce0; font-weight: 700; gap: 7px; font-size: 14.600px; letter-spacing: .05px; }
.va svg { margin-top: 2px; }
.hbar { height: 21px; background: #f0f0f0; border-radius: 0 0 16px 16px; display: flex; align-items: center; padding: 0 8px; }
.hbar b, .hbar s { width: 0; height: 0; border: 5px solid transparent; }
.hbar b { border-left: 0; border-right-color: #a3a3a3; }
.hbar s { border-right: 0; border-left-color: #505050; margin-left: auto; }
.hbar u { width: 731px; height: 17px; background: #c1c1c1; margin-left: 8px; }

.panel { flex: 1; min-height: 0; border-top: 1px solid #b4b4bb; display: flex; }
.pmain { flex: 1; padding: 0 18px; overflow: hidden; }
.grip { height: 7px; width: 14px; margin: 7px auto 0 789px; display: flex; flex-direction: column; justify-content: space-between; }
.grip i { height: 2px; background: #424650; }
.ptitle { display: flex; align-items: center; height: 26px; margin-top: 4px; padding-right: 7px; color: #424650; }
h2 { flex: 1; font-size: 18.700px; line-height: 26px; font-weight: 700; letter-spacing: .6px; color: #0f141a; }
.ptitle i { width: 1px; height: 26px; background: #c6c6cd; margin: 0 12px 0 11px; }
.tabs { display: flex; margin-top: 18px; height: 44px; border-bottom: 1px solid #c6c6cd; font-size: 16.600px; font-weight: 700; color: #424650; }
.tabs a { position: relative; height: 43px; line-height: 44px; white-space: nowrap; padding-left: 23.500px; }
.tabs a:not(:last-child)::after { content: ""; position: absolute; right: 0; top: 11px; width: 1px; height: 22px; background: #c6c6cd; }
.tabs a:nth-child(1) { width: 105px; }
.tabs a:nth-child(2) { width: 199px; }
.tabs a:nth-child(3) { width: 142px; }
.tabs a:nth-child(4) { width: 116px; }
.tabs a:nth-child(5) { width: 147px; }
.tabs a:nth-child(6) { width: 113px; }
.tabs .on { color: #006ce0; background: linear-gradient(#006ce0, #006ce0) 2px 100% / 102px 4px no-repeat; }
h4 { margin: 25px 0 0 24px; height: 26px; display: flex; align-items: center; font-size: 16.300px; font-weight: 700; }
h4 svg { width: 12px; height: 10px; margin-right: 9px; }
h4 span { width: 162px; white-space: nowrap; margin-bottom: 2px; }
h4 .info { padding-top: 0; }
.cols { display: grid; grid-template-columns: 527px 515px 1fr; grid-template-rows: 73px 88px 63px 63px 63px; margin-top: 1px; }
.cols dl { padding: 9px 0 0 9px; border-left: 1px solid #c6c6cd; white-space: nowrap; }
.cols dl:nth-child(n+4) { padding-top: 0; }
.cols dl:nth-child(n+4) dt { margin-top: -1px; }
.cols dl:nth-child(3n+1) { border: 0; padding-left: 22.500px; }
dt { font-weight: 700; font-size: 14.650px; line-height: 21px; height: 21px; }
dd { display: flex; align-items: center; height: 23px; line-height: 20px; padding-bottom: 1px; letter-spacing: .3px; }
dd.id { letter-spacing: .45px; }
.cp { width: 18px; height: 18px; margin: 3px 7px 0 4px; }
.ex { width: 16px; height: 16px; margin: 3px 0 0 5px; }
.ip { width: 117px; }
.bar { margin-left: 2px; }
dd a { color: #006ce0; letter-spacing: -.05px; }
.st { color: #656871; gap: 4px; letter-spacing: 0; }
.st svg { margin-top: 2px; }
.second { margin-top: 2px; }

.foot { height: 35px; flex: none; background: #161d26; border-top: 1px solid #424650; display: flex; align-items: center; padding-left: 18px; color: #ebebf0; font-size: 13.500px; letter-spacing: -.2px; white-space: nowrap; }
.foot > span { line-height: 32px; padding-bottom: 2px; }
.f1 { width: 94px; margin-left: 6px; }
.foot .f3 { margin-left: auto; width: 342px; color: #c6c6cd; letter-spacing: -.17px; }
.f4 { width: 73px; }
.f5 { width: 65px; }
.foot .f6 { width: 133px; letter-spacing: -.32px; }

/* Taskbar */
.taskbar { height: 59px; flex: none; border-top: 1px solid #76483f; background: linear-gradient(90deg, #5f2d26 0%, #66302a 8%, #74352c 25%, #723a31 30%, #623029 42%, #6a3a2d 55%, #724233 66%, #643229 73%, #552722 85%, #552823 100%); display: flex; align-items: center; font-family: "Open Sans", sans-serif; color: #fff; }
.wx { margin: -8px 0 0 24px; }
.wt { margin: -2px 0 0 4px; width: 466px; display: flex; flex-direction: column; font-size: 15px; line-height: 20px; letter-spacing: -.3px; }
.wt span:last-child { color: #d9c6c2; }
.tsearch { margin-left: 17px; width: 275px; height: 40px; border-radius: 20px; background: #84554c; border: 1px solid #8f635b; display: flex; align-items: center; padding: 0 4px 0 14px; font-size: 16.500px; letter-spacing: -.2px; color: #e9dcd9; }
.tsearch span { flex: 1; margin-left: 13px; }
.apps { margin-left: 14px; display: flex; align-items: center; gap: 23px; }
.apps > svg { width: 32px; height: 32px; }
.cur { width: 50px; height: 50px; margin-left: -8px; border-radius: 6px; background: #83594b; display: flex; flex-direction: column; align-items: center; padding-top: 3px; }
.cur i { width: 20px; height: 4px; border-radius: 2px; background: #dcb4a2; margin-top: 2px; }
.tray { margin-left: auto; display: flex; align-items: center; margin-right: 23px; font-size: 15px; line-height: 20px; letter-spacing: -.4px; }
.sh { margin-left: 22px; }
.lang { width: 40px; margin: -2px 0 0 15px; text-align: center; display: flex; flex-direction: column; }
.wf { margin-left: 18px; }
.sp { margin-left: 10px; }
.bt { margin-left: 9px; }
.clock { width: 99px; margin-top: -2px; text-align: right; display: flex; flex-direction: column; letter-spacing: 0; }
```
